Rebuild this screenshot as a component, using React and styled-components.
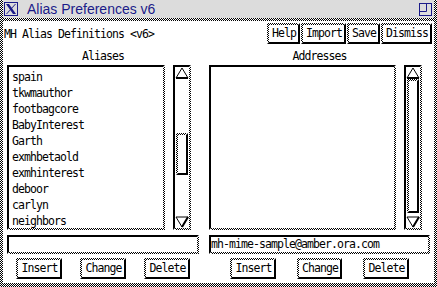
import styled, { createGlobalStyle, css } from "styled-components";

const GlobalStyle = createGlobalStyle`
  html, body {
    margin: 0;
    padding: 0;
    background: #fff;
  }
  body {
    width: 437px;
    height: 287px;
    overflow: hidden;
  }
`;

const stipple = "repeating-conic-gradient(#000 0 25%, #fff 0 50%)";

// tk monochrome relief: black on one side, 50% stipple on the other
const bevel = (sunken) => css`
  border-style: solid;
  border-width: 2px;
  border-color: ${sunken
    ? "#000 transparent transparent #000"
    : "transparent #000 #000 transparent"};
  background-image: linear-gradient(#fff, #fff), ${stipple};
  background-clip: padding-box, border-box;
  background-origin: padding-box, border-box;
  background-size: auto, 2px 2px;
`;

const aliases = [
  "spain",
  "tkwmauthor",
  "footbagcore",
  "BabyInterest",
  "Garth",
  "exmhbetaold",
  "exmhinterest",
  "deboor",
  "carlyn",
  "neighbors",
];

const XLogo = () => (
  <svg width="14" height="14" viewBox="0 0 14 14">
    <rect x="0.5" y="0.5" width="13" height="13" fill="none" stroke="#1c1c8a" />
    <polygon points="2,2 5,2 12,12 9,12" fill="#1c1c8a" />
    <polygon points="11,2 12,2 3,12 2,12" fill="#1c1c8a" />
  </svg>
);

const ZoomIcon = () => (
  <svg width="13" height="13" viewBox="0 0 13 13">
    <rect x="0.5" y="0.5" width="12" height="12" fill="none" stroke="#1c1c8a" />
    <path d="M7.5 1 V8.5 H1" fill="none" stroke="#1c1c8a" />
  </svg>
);

const Arrow = ({ down }) => (
  <svg width="14" height="12" viewBox="0 0 14 12">
    {down ? (
      <>
        <polygon points="1,1 13,1 7,11" fill="#fff" stroke="#000" />
        <line x1="7" y1="11" x2="13" y2="1" stroke="#000" strokeWidth="2" />
      </>
    ) : (
      <>
        <polygon points="7,1 1,11 13,11" fill="#fff" stroke="#000" />
        <line x1="1" y1="11" x2="13" y2="11" stroke="#000" strokeWidth="2" />
      </>
    )}
  </svg>
);

const Scroll = ({ top, size }) => (
  <Scrollbar>
    <Arrow />
    <Track>
      <Slider $top={top} $size={size} />
    </Track>
    <Arrow down />
  </Scrollbar>
);

const Buttons = ({ spread }) => (
  <ButtonRow $spread={spread}>
    <Button>Insert</Button>
    <Button>Change</Button>
    <Button>Delete</Button>
  </ButtonRow>
);

const App = () => {
  return (
    <>
      <GlobalStyle />
      <Window>
        <TitleBar>
          <XLogo />
          <Title>Alias Preferences v6</Title>
          <ZoomIcon />
        </TitleBar>
        <Body>
          <Header>
            <Caption>MH Alias Definitions &lt;v6&gt;</Caption>
            <Toolbar>
              <Button>Help</Button>
              <Button>Import</Button>
              <Button>Save</Button>
              <Button>Dismiss</Button>
            </Toolbar>
          </Header>
          <Columns>
            <Column $width="192px">
              <Label>Aliases</Label>
              <ListRow>
                <ListBox>
                  {aliases.map((name) => (
                    <Item key={name}>{name}</Item>
                  ))}
                </ListBox>
                <Scroll top={54} size={42} />
              </ListRow>
              <Entry />
              <Buttons spread="space-around" />
            </Column>
            <Column>
              <Label>Addresses</Label>
              <ListRow>
                <ListBox />
                <Scroll top={0} size={134} />
              </ListRow>
              <Entry>mh-mime-sample@amber.ora.com</Entry>
              <Buttons spread="space-evenly" />
            </Column>
          </Columns>
        </Body>
      </Window>
    </>
  );
};

const Window = styled.div`
  width: 437px;
  height: 287px;
  box-sizing: border-box;
  padding: 0 3px 4px 3px;
  display: flex;
  flex-direction: column;
  background: ${stipple} 0 0 / 2px 2px;
  font-family: "DejaVu Sans Mono", "Liberation Mono", monospace;
  font-size: 11.5px;
  letter-spacing: -0.92px;
  color: #000;
`;

const TitleBar = styled.div`
  height: 18px;
  margin-bottom: 3px;
  padding: 0 2px 0 1px;
  display: flex;
  align-items: center;
  background: #dcdcdc;
`;

const Title = styled.div`
  flex: 1;
  margin-left: 9px;
  font-family: "Liberation Sans", Arial, sans-serif;
  font-size: 14px;
  letter-spacing: 0;
  color: #1c1c8a;
`;

const Body = styled.div`
  flex: 1;
  background: #fff;
  display: flex;
  flex-direction: column;
`;

const Header = styled.div`
  padding: 2px 2px 0 1px;
  display: flex;
  align-items: center;
  justify-content: space-between;
`;

const Caption = styled.div`
  white-space: pre;
`;

const Toolbar = styled.div`
  display: flex;
  gap: 1px;
`;

const Button = styled.div`
  ${bevel(false)}
  height: 17px;
  padding: 0 2px 0 3px;
  line-height: 17px;
  white-space: pre;
`;

const Columns = styled.div`
  display: flex;
  gap: 10px;
  padding: 0 4px;
`;

const Column = styled.div`
  flex: ${(p) => (p.$width ? `0 0 ${p.$width}` : "1")};
  display: flex;
  flex-direction: column;
`;

const Label = styled.div`
  margin: 6px 0 2px;
  line-height: 13px;
  text-align: center;
`;

const ListRow = styled.div`
  height: 165px;
  display: flex;
`;

const ListBox = styled.div`
  ${bevel(true)}
  flex: 1;
  padding: 2px 3px;
  overflow: hidden;
`;

const Item = styled.div`
  height: 16px;
  line-height: 16px;
  white-space: pre;
`;

const Scrollbar = styled.div`
  ${bevel(true)}
  width: 14px;
  margin: 0 8px;
  display: flex;
  flex-direction: column;
`;

const Track = styled.div`
  flex: 1;
  padding: 0 1px;
`;

const Slider = styled.div`
  ${bevel(false)}
  margin-top: ${(p) => p.$top}px;
  height: ${(p) => p.$size - 4}px;
`;

const Entry = styled.div`
  ${bevel(true)}
  height: 15px;
  margin-top: 5px;
  line-height: 15px;
  white-space: pre;
  overflow: hidden;
`;

const ButtonRow = styled.div`
  margin-top: 4px;
  display: flex;
  justify-content: ${(p) => p.$spread};
`;

export default App;
